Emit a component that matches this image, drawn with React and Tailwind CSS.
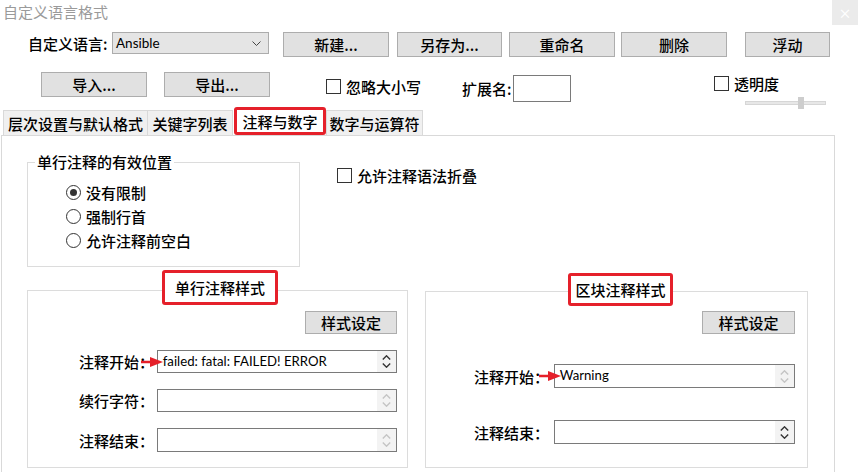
import React from "react";

const latin = "font-['Lato',sans-serif]";

const Button = ({ children, className = "" }) => (
  <div
    className={`flex items-center justify-center bg-[#e1e1e1] border border-[#adadad] text-[15px] leading-none text-black ${className}`}
  >
    {children}
  </div>
);

const Checkbox = ({ label, className = "" }) => (
  <div className={`flex items-center ${className}`}>
    <div className="w-[15px] h-[15px] border border-[#333] bg-white" />
    <span className="ml-[5px] text-[15px] leading-[15px]">{label}</span>
  </div>
);

const Radio = ({ label, checked }) => (
  <div className="flex items-center h-[24px]">
    <div className="w-[15px] h-[15px] rounded-full border border-[#333] bg-white flex items-center justify-center">
      {checked && <div className="w-[7px] h-[7px] rounded-full bg-[#333]" />}
    </div>
    <span className="ml-[5px] text-[15px] leading-[15px]">{label}</span>
  </div>
);

const RedArrow = ({ className = "" }) => (
  <svg
    className={`absolute top-1/2 -translate-y-1/2 z-10 ${className}`}
    width="22"
    height="11"
    viewBox="0 0 22 11"
  >
    <line x1="0" y1="5.5" x2="11" y2="5.5" stroke="#e5202a" strokeWidth="2.5" />
    <polygon points="9,0.5 22,5.5 9,10.5" fill="#e5202a" />
  </svg>
);

const SpinInput = ({ value, active, arrow, className = "" }) => (
  <div className={`relative flex border border-[#7a7a7a] bg-white ${className}`}>
    {arrow && <RedArrow className={arrow} />}
    <div className={`flex-1 pl-[5px] flex items-center text-[13.2px] text-black font-normal ${latin}`}>
      {value}
    </div>
    <div className="w-[19px] bg-[#f3f3f3] flex flex-col items-center justify-center gap-[3px]">
      <svg width="9" height="5" viewBox="0 0 9 5">
        <path d="M0.8 4.4 L4.5 0.8 L8.2 4.4" fill="none" stroke={active ? "#333" : "#c4c4c4"} strokeWidth="1.4" />
      </svg>
      <svg width="9" height="5" viewBox="0 0 9 5">
        <path d="M0.8 0.6 L4.5 4.2 L8.2 0.6" fill="none" stroke={active ? "#333" : "#c4c4c4"} strokeWidth="1.4" />
      </svg>
    </div>
  </div>
);

const FieldRow = ({ label, children, labelW }) => (
  <div className="flex items-center">
    <span className={`${labelW} text-[15px] leading-[15px]`}>{label}</span>
    {children}
  </div>
);

export default function App() {
  return (
    <div className="w-[858px] h-[472px] overflow-hidden bg-white text-black font-medium font-['Noto_Sans_CJK_SC',sans-serif]">
      {/* title bar */}
      <div className="flex justify-between h-[25px]">
        <span className="pl-[3px] pt-[3px] text-[15px] leading-[18px] text-[#9a9a9a] font-normal">自定义语言格式</span>
        <div className="w-[26px] h-[25px] bg-[#ebebeb] flex items-center justify-center text-white text-[13px] leading-none">
          ×
        </div>
      </div>

      {/* row 1 */}
      <div className="mt-[7px] h-[25px] flex items-start pl-[28px]">
        <span className="w-[84px] h-[22px] flex items-center text-[15px] leading-none">自定义语言:</span>
        <div className="w-[157px] h-[22px] bg-[#e5e5e5] border border-[#acacac] flex items-center justify-between pl-[3px] pr-[7px]">
          <span className={`text-[13.5px] font-normal ${latin}`}>Ansible</span>
          <svg width="9" height="5" viewBox="0 0 9 5">
            <path d="M0.5 0.5 L4.5 4.5 L8.5 0.5" fill="none" stroke="#444" strokeWidth="1" />
          </svg>
        </div>
        <Button className="ml-[14px] w-[106px] h-[25px]">新建...</Button>
        <Button className="ml-[8px] w-[105px] h-[25px]">另存为...</Button>
        <Button className="ml-[7px] w-[106px] h-[25px]">重命名</Button>
        <Button className="ml-[6px] w-[106px] h-[25px]">删除</Button>
        <Button className="ml-[18px] w-[85px] h-[25px]">浮动</Button>
      </div>

      {/* row 2 */}
      <div className="mt-[15px] h-[35px] flex items-start pl-[41px]">
        <Button className="w-[106px] h-[25px]">导入...</Button>
        <Button className="ml-[17px] w-[106px] h-[25px]">导出...</Button>
        <Checkbox label="忽略大小写" className="ml-[56px] mt-[7px]" />
        <div className="ml-[41px] mt-[3px] flex items-center">
          <span className="w-[51px] text-[15px] leading-none">扩展名:</span>
          <div className="w-[58px] h-[27px] border border-[#7a7a7a] bg-white" />
        </div>
        <div className="ml-[143px] mt-[4px] flex flex-col">
          <Checkbox label="透明度" />
          <div className="ml-[31px] mt-[6px] relative w-[81px] h-[12px] flex items-center">
            <div className="w-full h-[4px] bg-[#e7e7e7] border border-[#d6d6d6]" />
            <div className="absolute left-[53px] top-0 w-[6px] h-[12px] bg-[#cdcdcd]" />
          </div>
        </div>
      </div>

      {/* tabs */}
      <div className="h-[28px] flex items-end pl-[3px]">
        <div className="w-[145px] h-[25px] bg-[#f0f0f0] border border-b-0 border-[#d9d9d9] flex items-center justify-center text-[15px] leading-none">
          层次设置与默认格式
        </div>
        <div className="w-[85px] h-[25px] bg-[#f0f0f0] border border-l-0 border-b-0 border-[#d9d9d9] flex items-center justify-center text-[15px] leading-none">
          关键字列表
        </div>
        <div className="ml-[1px] w-[92px] h-[28px] bg-white border-[3px] border-[#e5202a] rounded-[3px] flex items-center justify-center text-[15px] leading-none">
          注释与数字
        </div>
        <div className="w-[97px] h-[25px] bg-[#f0f0f0] border border-b-0 border-[#d9d9d9] flex items-center justify-center text-[15px] leading-none">
          数字与运算符
        </div>
      </div>

      {/* panel */}
      <div className="ml-[1px] w-[834px] h-[345px] border border-[#d9d9d9] pl-[25px]">
        <div className="flex items-start mt-[26px]">
          <div className="relative w-[273px] h-[105px] border border-[#dcdcdc] pl-[38px] pt-[17px]">
            <span className="absolute left-[7px] -top-[11px] bg-white px-[2px] text-[15px] leading-[20px]">
              单行注释的有效位置
            </span>
            <Radio label="没有限制" checked />
            <Radio label="强制行首" />
            <Radio label="允许注释前空白" />
          </div>
          <Checkbox label="允许注释语法折叠" className="ml-[37px] mt-[6px]" />
        </div>

        <div className="flex items-start mt-[23px]">
          {/* single line comment style */}
          <div className="relative w-[381px] h-[178px] border border-[#dcdcdc] pt-[20px] pr-[10px]">
            <div className="absolute left-[134px] -top-[21px] w-[116px] h-[35px] bg-white border-[3px] border-[#e5202a] rounded-[3px] flex items-center justify-center text-[15px] leading-none">
              单行注释样式
            </div>
            <div className="flex justify-end">
              <Button className="w-[92px] h-[23px]">样式设定</Button>
            </div>
            <div className="mt-[16px] pl-[51px] flex flex-col gap-[16px]">
              <FieldRow label="注释开始：" labelW="w-[78px]">
                <SpinInput value="failed: fatal: FAILED! ERROR" active arrow="-left-[17px]" className="w-[241px] h-[23px]" />
              </FieldRow>
              <FieldRow label="续行字符：" labelW="w-[78px]">
                <SpinInput value="" className="w-[241px] h-[23px]" />
              </FieldRow>
              <FieldRow label="注释结束：" labelW="w-[78px]">
                <SpinInput value="" className="w-[241px] h-[24px]" />
              </FieldRow>
            </div>
          </div>

          {/* block comment style */}
          <div className="relative ml-[17px] mt-[1px] w-[383px] h-[177px] border border-[#dcdcdc] pt-[19px] pr-[12px]">
            <div className="absolute left-[142px] -top-[19px] w-[105px] h-[33px] bg-white border-[3px] border-[#e5202a] rounded-[3px] flex items-center justify-center text-[15px] leading-none">
              区块注释样式
            </div>
            <div className="flex justify-end">
              <Button className="w-[93px] h-[23px]">样式设定</Button>
            </div>
            <div className="mt-[30px] pl-[48px] flex flex-col gap-[32px]">
              <FieldRow label="注释开始：" labelW="w-[80px]">
                <SpinInput value="Warning" arrow="-left-[16px]" className="w-[242px] h-[24px]" />
              </FieldRow>
              <FieldRow label="注释结束：" labelW="w-[80px]">
                <SpinInput value="" active className="w-[242px] h-[24px]" />
              </FieldRow>
            </div>
          </div>
        </div>
      </div>
    </div>
  );
}
